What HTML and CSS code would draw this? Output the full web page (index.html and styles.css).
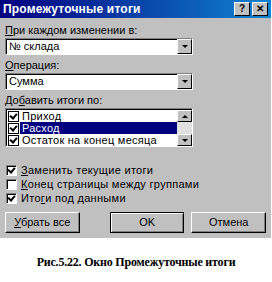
FILE: index.html
```html
<html>
<head>
  <title>Промежуточные итоги</title>
  <link rel="stylesheet" href="styles.css">
</head>
<body>

<div class="dialog">
  <div class="titlebar">
    <span class="title-text">Промежуточные итоги</span>
    <span class="title-btn help">?</span>
    <span class="title-btn close">&#x2715;</span>
  </div>

  <div class="content">
    <div class="label first"><u>П</u>ри каждом изменении в:</div>
    <div class="combo">
      <div class="combo-field">№ склада</div>
      <div class="arrow-btn"><span class="tri-down"></span></div>
    </div>

    <div class="label"><u>О</u>перация:</div>
    <div class="combo">
      <div class="combo-field">Сумма</div>
      <div class="arrow-btn"><span class="tri-down"></span></div>
    </div>

    <div class="label">До<u>б</u>авить итоги по:</div>
    <div class="listbox">
      <div class="list-items">
        <div class="list-row"><span class="chk on"></span><span class="row-text">Приход</span></div>
        <div class="list-row selected"><span class="chk on"></span><span class="row-text">Расход</span></div>
        <div class="list-row"><span class="chk on"></span><span class="row-text">Остаток на конец месяца</span></div>
      </div>
      <div class="scrollbar">
        <div class="arrow-btn small"><span class="tri-up"></span></div>
        <div class="track"></div>
        <div class="arrow-btn small"><span class="tri-down"></span></div>
      </div>
    </div>

    <div class="options">
      <div class="option"><span class="chk on"></span><u>З</u>аменить текущие итоги</div>
      <div class="option"><span class="chk"></span><u>К</u>онец страницы между группами</div>
      <div class="option"><span class="chk on"></span>Ито<u>г</u>и под данными</div>
    </div>

    <div class="buttons">
      <div class="button"><u>У</u>брать все</div>
      <div class="spacer"></div>
      <div class="button default">OK</div>
      <div class="button">Отмена</div>
    </div>
  </div>
</div>

<div class="caption">Рис.5.22. Окно Промежуточные итоги</div>

</body>
</html>
```

FILE: styles.css
```css
/* page */
body {
  margin: 0;
  background-color: #ffffff;
  font-family: 'Liberation Sans', Arial, sans-serif;
  font-size: 11px;
  color: #000000;
}

/* dialog window */
.dialog {
  width: 271px;
  height: 238px;
  background-color: #c0c0c0;
}

.titlebar {
  height: 18px;
  display: flex;
  align-items: center;
  padding: 0 3px;
  background: linear-gradient(to right, #000080, #1084d0);
  color: #ffffff;
}

.title-text {
  flex: 1;
  font-weight: bold;
  font-size: 12px;
  letter-spacing: 0.2px;
}

.title-btn {
  width: 14px;
  height: 12px;
  margin-left: 2px;
  background-color: #c0c0c0;
  color: #000000;
  font-weight: bold;
  font-size: 10px;
  line-height: 12px;
  text-align: center;
  border-top: 1px solid #ffffff;
  border-left: 1px solid #ffffff;
  border-right: 1px solid #000000;
  border-bottom: 1px solid #000000;
}

.content {
  padding: 0 5px;
}

.label {
  margin-top: 4px;
  height: 12px;
  line-height: 12px;
}
.label.first {
  margin-top: 6px;
}

/* combo boxes */
.combo {
  width: 188px;
  height: 17px;
  margin-top: 2px;
  display: flex;
  box-sizing: border-box;
  background-color: #ffffff;
  border-top: 1px solid #808080;
  border-left: 1px solid #808080;
  border-right: 1px solid #ffffff;
  border-bottom: 1px solid #ffffff;
  box-shadow: inset 1px 1px 0 #000000;
}

.combo-field {
  flex: 1;
  padding-left: 3px;
  line-height: 15px;
}

.arrow-btn {
  width: 15px;
  height: 15px;
  box-sizing: border-box;
  display: flex;
  align-items: center;
  justify-content: center;
  background-color: #c0c0c0;
  border-top: 1px solid #ffffff;
  border-left: 1px solid #ffffff;
  border-right: 1px solid #000000;
  border-bottom: 1px solid #000000;
}
.arrow-btn.small {
  height: 12px;
}

.tri-down {
  width: 0;
  height: 0;
  border-left: 3px solid transparent;
  border-right: 3px solid transparent;
  border-top: 3px solid #000000;
}
.tri-up {
  width: 0;
  height: 0;
  border-left: 3px solid transparent;
  border-right: 3px solid transparent;
  border-bottom: 3px solid #000000;
}

/* list box */
.listbox {
  width: 188px;
  margin-top: 2px;
  display: flex;
  box-sizing: border-box;
  background-color: #ffffff;
  border-top: 1px solid #808080;
  border-left: 1px solid #808080;
  border-right: 1px solid #ffffff;
  border-bottom: 1px solid #ffffff;
  box-shadow: inset 1px 1px 0 #000000;
  padding: 1px 0 0 1px;
}

.list-items {
  flex: 1;
}

.list-row {
  height: 12px;
  display: flex;
  align-items: center;
}

.row-text {
  flex: 1;
  padding-left: 2px;
  line-height: 12px;
  letter-spacing: 0.25px;
}

.list-row.selected .row-text {
  background-color: #000080;
  color: #ffffff;
}

.scrollbar {
  width: 15px;
  display: flex;
  flex-direction: column;
}
.track {
  flex: 1;
  background-color: #e0e0e0;
}

/* check boxes */
.chk {
  width: 11px;
  height: 11px;
  box-sizing: border-box;
  margin: 0 4px 0 1px;
  background-color: #ffffff;
  border-top: 1px solid #808080;
  border-left: 1px solid #808080;
  border-right: 1px solid #ffffff;
  border-bottom: 1px solid #ffffff;
  box-shadow: inset 1px 1px 0 #000000;
  position: relative;
}
.list-row .chk {
  margin: 0 1px 0 1px;
  border: 1px solid #000000;
  box-shadow: none;
}
.chk.on::after {
  content: "";
  position: absolute;
  left: 2px;
  top: 0px;
  width: 3px;
  height: 5px;
  border-right: 2px solid #000000;
  border-bottom: 2px solid #000000;
  transform: rotate(40deg);
}

.options {
  margin-top: 16px;
}

.option {
  height: 14px;
  display: flex;
  align-items: center;
  letter-spacing: 0.3px;
}

/* buttons */
.buttons {
  margin-top: 7px;
  display: flex;
  gap: 7px;
}

.spacer {
  width: 17px;
}

.button {
  width: 77px;
  height: 21px;
  box-sizing: border-box;
  line-height: 18px;
  text-align: center;
  background-color: #c0c0c0;
  border-top: 1px solid #ffffff;
  border-left: 1px solid #ffffff;
  border-right: 1px solid #000000;
  border-bottom: 1px solid #000000;
  box-shadow: inset -1px -1px 0 #808080;
}

.button.default {
  border: 1px solid #000000;
  box-shadow: inset 1px 1px 0 #ffffff, inset -1px -1px 0 #808080;
}

/* figure caption */
.caption {
  margin-top: 16px;
  line-height: 16px;
  text-align: center;
  font-family: 'Liberation Serif', 'Times New Roman', serif;
  font-weight: bold;
  font-size: 12px;
  letter-spacing: -0.2px;
}
```
